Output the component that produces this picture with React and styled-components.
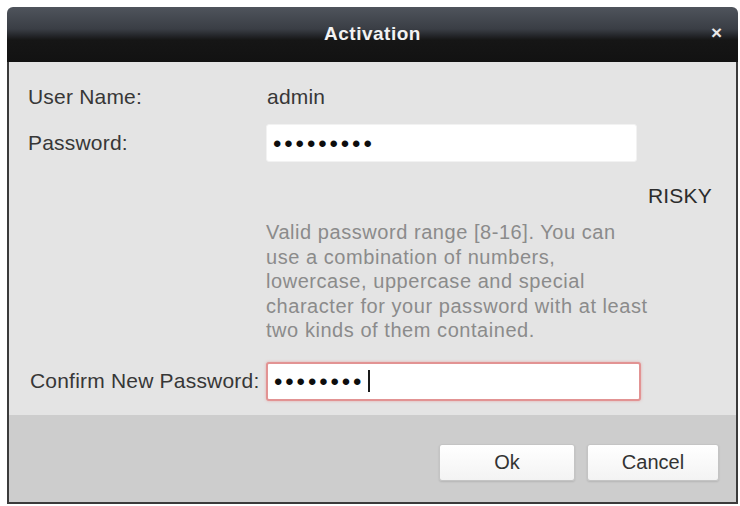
import React from 'react'
import styled, { createGlobalStyle } from 'styled-components'

const Global = createGlobalStyle`
  body {
    margin: 0;
    background: #ffffff;
    font-family: "Liberation Sans", Arial, sans-serif;
  }
`

const Dialog = styled.div`
  margin: 7px 0 0 7px;
  width: 731px;
  height: 497px;
  display: flex;
  flex-direction: column;
  border-radius: 6px 6px 0 0;
  overflow: hidden;
`

const TitleBar = styled.div`
  height: 55px;
  flex-shrink: 0;
  display: grid;
  grid-template-columns: 1fr auto 1fr;
  align-items: center;
  background: linear-gradient(#4f545c 0%, #3a3e45 40%, #24262a 52%, #161616 60%, #121212 100%);
  color: #f2f2f2;
`

const Title = styled.div`
  grid-column: 2;
  font-size: 19px;
  font-weight: bold;
  letter-spacing: 0.5px;
  margin-top: -2px;
`

const Close = styled.div`
  justify-self: end;
  margin-right: 16px;
  margin-top: -3px;
  font-size: 19px;
  font-weight: bold;
  color: #e8e8e8;
`

const Body = styled.div`
  flex: 1;
  background: #e4e4e4;
  border-left: 2px solid #3b3b3b;
  border-right: 2px solid #3b3b3b;
  padding: 23px 24px 0 19px;
  display: flex;
  flex-direction: column;
  color: #373737;
  font-size: 21px;
  letter-spacing: 0.2px;
`

const Row = styled.div`
  display: grid;
  grid-template-columns: 238px 1fr;
  align-items: center;
  margin-top: ${p => p.$gap || 0}px;
  line-height: 24px;
`

const Label = styled.div`
  margin-left: ${p => p.$shift || 0}px;
  white-space: nowrap;
`

const Value = styled.div`
  padding-left: 1px;
`

const Field = styled.div`
  box-sizing: border-box;
  width: ${p => p.$width}px;
  height: ${p => p.$height}px;
  background: #ffffff;
  display: flex;
  align-items: center;
  padding-left: 6px;
  border-radius: 3px;
  border: ${p => (p.$alert ? '2px solid #e29393' : '1px solid #f2f2f2')};
  box-shadow: ${p => (p.$alert ? '0 0 3px rgba(230, 140, 140, 0.6)' : 'none')};
`

const Dots = styled.span`
  font-size: 24px;
  letter-spacing: 2.9px;
  color: #0d0d0d;
  line-height: 1;
  margin-top: 1px;
`

const Caret = styled.span`
  display: inline-block;
  width: 2px;
  height: 22px;
  background: #1a1a1a;
  margin-left: 4px;
`

const Strength = styled.div`
  align-self: flex-end;
  margin-top: 22px;
  line-height: 24px;
  color: #2c2c2c;
`

const Hint = styled.p`
  margin: 12px 0 0 238px;
  font-size: 20px;
  line-height: 24.5px;
  letter-spacing: 0.55px;
  color: #8b8b8b;
`

const Footer = styled.div`
  height: 89px;
  flex-shrink: 0;
  box-sizing: border-box;
  background: #cdcdcd;
  border: 2px solid #3b3b3b;
  border-top: none;
  display: flex;
  justify-content: flex-end;
  align-items: flex-start;
  gap: 12px;
  padding: 29px 17px 0 0;
`

const Button = styled.button`
  width: ${p => p.$width}px;
  height: 37px;
  border: 1px solid #c4c4c4;
  border-radius: 3px;
  background: linear-gradient(#ffffff, #f3f3f3);
  box-shadow: 0 1px 2px rgba(0, 0, 0, 0.12);
  font-family: "Liberation Sans", Arial, sans-serif;
  font-size: 20px;
  color: #333333;
  padding: 0;
`

export default function App() {
  return (
    <>
      <Global />
      <Dialog>
        <TitleBar>
          <Title>Activation</Title>
          <Close>×</Close>
        </TitleBar>
        <Body>
          <Row>
            <Label>User Name:</Label>
            <Value>admin</Value>
          </Row>
          <Row $gap={15}>
            <Label>Password:</Label>
            <Field $width={371} $height={38}>
              <Dots>•••••••••</Dots>
            </Field>
          </Row>
          <Strength>RISKY</Strength>
          <Hint>
            Valid password range [8-16]. You can<br />
            use a combination of numbers,<br />
            lowercase, uppercase and special<br />
            character for your password with at least<br />
            two kinds of them contained.
          </Hint>
          <Row $gap={19}>
            <Label $shift={2}>Confirm New Password:</Label>
            <Field $width={375} $height={39} $alert>
              <Dots>••••••••</Dots>
              <Caret />
            </Field>
          </Row>
        </Body>
        <Footer>
          <Button $width={136}>Ok</Button>
          <Button $width={132}>Cancel</Button>
        </Footer>
      </Dialog>
    </>
  )
}
